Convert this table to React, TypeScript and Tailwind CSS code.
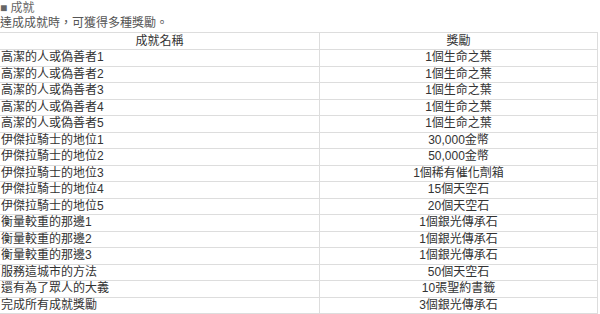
const rows: [string, string][] = [
  ['高潔的人或偽善者1', '1個生命之葉'],
  ['高潔的人或偽善者2', '1個生命之葉'],
  ['高潔的人或偽善者3', '1個生命之葉'],
  ['高潔的人或偽善者4', '1個生命之葉'],
  ['高潔的人或偽善者5', '1個生命之葉'],
  ['伊傑拉騎士的地位1', '30,000金幣'],
  ['伊傑拉騎士的地位2', '50,000金幣'],
  ['伊傑拉騎士的地位3', '1個稀有催化劑箱'],
  ['伊傑拉騎士的地位4', '15個天空石'],
  ['伊傑拉騎士的地位5', '20個天空石'],
  ['衡量較重的那邊1', '1個銀光傳承石'],
  ['衡量較重的那邊2', '1個銀光傳承石'],
  ['衡量較重的那邊3', '1個銀光傳承石'],
  ['服務這城市的方法', '50個天空石'],
  ['還有為了眾人的大義', '10張聖約書籤'],
  ['完成所有成就獎勵', '3個銀光傳承石'],
];

export default function App() {
  return (
    <div className="h-[314px] w-[600px] overflow-hidden bg-white text-[12px] text-[#333] [font-family:'Liberation_Sans','Noto_Sans_CJK_TC',sans-serif]">
      <div className="h-[16px] pt-[1px] leading-[14px] text-[#666]">■ 成就</div>
      <div className="h-[15px] leading-[14px] text-[#555]">達成成就時，可獲得多種獎勵。</div>
      <div className="mt-[1px] w-[598px] border-t border-r border-[#ddd]">
        <div className="grid h-[17px] grid-cols-[320px_1fr] border-b border-[#ddd] leading-[16px]">
          <div className="border-r border-[#ddd] text-center">成就名稱</div>
          <div className="text-center">獎勵</div>
        </div>
        {rows.map(([name, reward], i) => (
          <div
            key={`${name}-${i}`}
            className="grid h-[16.5px] grid-cols-[320px_1fr] border-b border-[#ddd] leading-[15px]"
          >
            <div className="border-r border-[#ddd] pl-[1px]">{name}</div>
            <div className="text-center">{reward}</div>
          </div>
        ))}
      </div>
    </div>
  );
}
